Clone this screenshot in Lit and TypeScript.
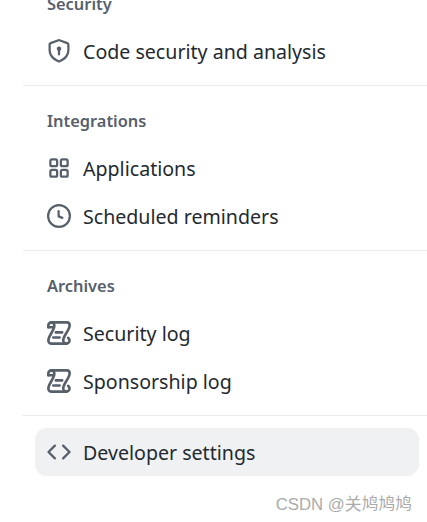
import { LitElement, css, html, svg } from 'lit'
import { customElement } from 'lit/decorators.js'

const ICONS = {
  shield: svg`<path fill-rule="evenodd" d="m8.533.133 5.25 1.909A1.75 1.75 0 0 1 15 3.687V7c0 1.566-.32 3.182-1.303 4.682-.983 1.498-2.585 2.813-5.032 3.855a1.697 1.697 0 0 1-1.33 0c-2.447-1.042-4.049-2.357-5.032-3.855C1.32 10.182 1 8.566 1 7V3.687c0-.74.462-1.402 1.158-1.645L7.467.133a1.75 1.75 0 0 1 1.066 0Zm-.55 1.416L2.674 3.458a.25.25 0 0 0-.174.229V7c0 1.358.275 2.666 1.057 3.86.784 1.194 2.121 2.34 4.366 3.297a.196.196 0 0 0 .154 0c2.245-.956 3.582-2.104 4.366-3.298C13.225 9.666 13.5 8.36 13.5 7V3.687a.25.25 0 0 0-.174-.238l-5.25-1.909a.25.25 0 0 0-.172 0ZM9.5 6.5c0 .536-.286 1.032-.75 1.3v2.45a.75.75 0 0 1-1.5 0V7.8A1.5 1.5 0 1 1 9.5 6.5Z"/>`,
  apps: svg`<path fill-rule="evenodd" d="M1.5 3.25c0-.966.784-1.75 1.75-1.75h2.5c.966 0 1.75.784 1.75 1.75v2.5A1.75 1.75 0 0 1 5.75 7.5h-2.5A1.75 1.75 0 0 1 1.5 5.75Zm7 0c0-.966.784-1.75 1.75-1.75h2.5c.966 0 1.75.784 1.75 1.75v2.5a1.75 1.75 0 0 1-1.75 1.75h-2.5A1.75 1.75 0 0 1 8.5 5.75Zm-7 7c0-.966.784-1.75 1.75-1.75h2.5c.966 0 1.75.784 1.75 1.75v2.5a1.75 1.75 0 0 1-1.75 1.75h-2.5a1.75 1.75 0 0 1-1.75-1.75Zm7 0c0-.966.784-1.75 1.75-1.75h2.5c.966 0 1.75.784 1.75 1.75v2.5a1.75 1.75 0 0 1-1.75 1.75h-2.5a1.75 1.75 0 0 1-1.75-1.75ZM3.25 3a.25.25 0 0 0-.25.25v2.5c0 .138.112.25.25.25h2.5A.25.25 0 0 0 6 5.75v-2.5A.25.25 0 0 0 5.75 3Zm7 0a.25.25 0 0 0-.25.25v2.5c0 .138.112.25.25.25h2.5a.25.25 0 0 0 .25-.25v-2.5a.25.25 0 0 0-.25-.25Zm-7 7a.25.25 0 0 0-.25.25v2.5c0 .138.112.25.25.25h2.5a.25.25 0 0 0 .25-.25v-2.5a.25.25 0 0 0-.25-.25Zm7 0a.25.25 0 0 0-.25.25v2.5c0 .138.112.25.25.25h2.5a.25.25 0 0 0 .25-.25v-2.5a.25.25 0 0 0-.25-.25Z"/>`,
  clock: svg`<path fill-rule="evenodd" d="M8 0a8 8 0 1 1 0 16A8 8 0 0 1 8 0ZM1.5 8a6.5 6.5 0 1 0 13 0 6.5 6.5 0 0 0-13 0Zm7-3.25v2.992l2.028.812a.75.75 0 0 1-.557 1.392l-2.5-1A.751.751 0 0 1 7 8.25v-3.5a.75.75 0 0 1 1.5 0Z"/>`,
  log: svg`<g fill="none" stroke="currentColor" stroke-width="1.75" stroke-linecap="round" stroke-linejoin="round"><path d="M2.75.9h10.5A2 2 0 0 1 15.1 3c0 3-4.3 6.8-4.3 10a2.1 2.1 0 1 0 3.3-1.8"/><path d="M.9 4.2V2.9a2 2 0 0 1 4 .1c0 3.4-4 6.8-4 10A2.1 2.1 0 0 0 3 15.1h10"/><path d="M5.9 7.6h4.2M4.2 11h4.2"/><path d="M.9 4.2h3.2"/></g>`,
  code: svg`<path fill-rule="evenodd" d="m11.28 3.22 4.25 4.25a.75.75 0 0 1 0 1.06l-4.25 4.25a.749.749 0 0 1-1.275-.326.749.749 0 0 1 .215-.734L13.94 8l-3.72-3.72a.749.749 0 0 1 .326-1.275.749.749 0 0 1 .734.215Zm-6.56 0a.751.751 0 0 1 1.042.018.751.751 0 0 1 .018 1.042L2.06 8l3.72 3.72a.749.749 0 0 1-.326 1.275.749.749 0 0 1-.734-.215L.47 8.53a.75.75 0 0 1 0-1.06Z"/>`,
}

type IconName = keyof typeof ICONS

const SECTIONS: { title: string; items: { icon: IconName; label: string }[] }[] = [
  { title: 'Security', items: [{ icon: 'shield', label: 'Code security and analysis' }] },
  {
    title: 'Integrations',
    items: [
      { icon: 'apps', label: 'Applications' },
      { icon: 'clock', label: 'Scheduled reminders' },
    ],
  },
  {
    title: 'Archives',
    items: [
      { icon: 'log', label: 'Security log' },
      { icon: 'log', label: 'Sponsorship log' },
    ],
  },
]

@customElement('app-root')
export class AppRoot extends LitElement {
  static styles = css`
    :host {
      display: block;
      position: relative;
      height: 522px;
      overflow: hidden;
      background: #fff;
      font-family: 'Noto Sans', 'Open Sans', sans-serif;
      color: #24292f;
    }

    nav {
      margin-top: -21px;
      padding-left: 23px;
    }

    section {
      padding-bottom: 10px;
      border-bottom: 1px solid #e9ebee;
      margin-bottom: 10px;
    }

    section.last {
      border-bottom: 0;
      padding: 2px 0 0;
      margin-bottom: 0;
    }

    h2 {
      margin: 0;
      padding: 0 0 0 24px;
      height: 48px;
      display: flex;
      align-items: center;
      font-size: 16.4px;
      font-weight: 600;
      color: #57606a;
    }

    .item {
      display: flex;
      align-items: center;
      gap: 12px;
      height: 48px;
      margin: 0 8px 0 12px;
      padding: 0 12px;
      border-radius: 12px;
      font-size: 19.6px;
    }

    .item.active {
      background: #eff1f3;
    }

    svg {
      width: 24px;
      height: 24px;
      flex: none;
      fill: #57606a;
      color: #57606a;
    }

    .watermark {
      position: absolute;
      right: 15px;
      top: 495px;
      font-family: 'Liberation Sans', 'Noto Sans CJK SC', sans-serif;
      font-size: 16.8px;
      line-height: 20px;
      color: #ababab;
    }
  `

  private item(icon: IconName, label: string, active = false) {
    return html`<div class="item ${active ? 'active' : ''}">
      <svg viewBox="0 0 16 16">${ICONS[icon]}</svg>
      <span>${label}</span>
    </div>`
  }

  render() {
    return html`
      <nav>
        ${SECTIONS.map(
          (s) => html`<section>
            <h2>${s.title}</h2>
            ${s.items.map((i) => this.item(i.icon, i.label))}
          </section>`,
        )}
        <section class="last">${this.item('code', 'Developer settings', true)}</section>
      </nav>
      <div class="watermark">CSDN @关鸠鸠鸠</div>
    `
  }
}
